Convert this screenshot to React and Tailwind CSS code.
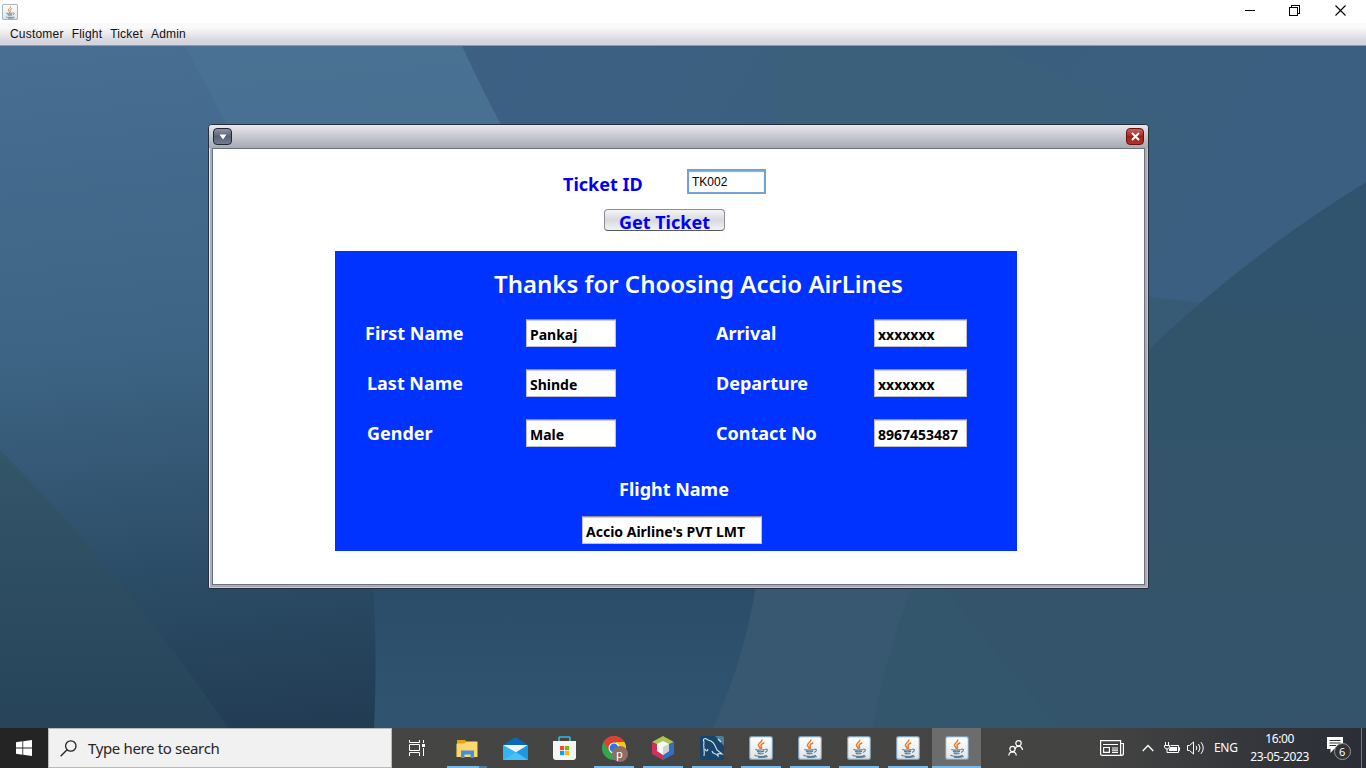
const ui = "font-['Noto_Sans','Open_Sans',sans-serif]";

function Wallpaper() {
  return (
    <svg className="absolute inset-0 h-full w-full" viewBox="0 46 1366 682" preserveAspectRatio="none">
      <defs>
        <linearGradient id="base" x1="0" y1="0" x2="0.2" y2="1">
          <stop offset="0" stopColor="#486f92" />
          <stop offset="0.45" stopColor="#3d6484" />
          <stop offset="0.8" stopColor="#2a4a63" />
          <stop offset="1" stopColor="#223c54" />
        </linearGradient>
        <linearGradient id="top" x1="0" y1="0" x2="1" y2="0.4">
          <stop offset="0" stopColor="#3b6083" />
          <stop offset="0.45" stopColor="#3a5f7d" />
          <stop offset="1" stopColor="#3b5f82" />
        </linearGradient>
        <linearGradient id="left" x1="0" y1="0" x2="0" y2="1">
          <stop offset="0" stopColor="#345669" />
          <stop offset="1" stopColor="#26435a" />
        </linearGradient>
        <linearGradient id="mid" x1="0" y1="0" x2="0" y2="1">
          <stop offset="0" stopColor="#2b4c68" />
          <stop offset="1" stopColor="#305470" />
        </linearGradient>
        <linearGradient id="right" x1="0" y1="0" x2="0" y2="1">
          <stop offset="0" stopColor="#30536f" />
          <stop offset="1" stopColor="#335369" />
        </linearGradient>
      </defs>
      <rect y="46" width="1366" height="682" fill="url(#base)" />
      <path d="M185 46H462L520 140H235Z" fill="#4b7495" opacity=".55" />
      <path d="M462 46H1366V740H600V300Q510 150 462 46Z" fill="url(#top)" />
      <path d="M768 46Q780 100 778 140H1210L990 46Z" fill="#3b607b" opacity=".6" />
      <path d="M0 450Q120 570 228 728H0Z" fill="url(#left)" />
      <path d="M372 570Q378 650 374 728H760L800 570Z" fill="url(#mid)" />
      <path d="M1366 182Q1240 260 1140 358V600H1366Z" fill="url(#right)" />
      <path d="M1140 296L1366 322V728H1140Z" fill="#34556a" opacity=".5" />
      <path d="M758 570Q748 650 713 728H1366V588H1140V570Z" fill="#375870" />
      <path d="M912 588Q890 640 872 728H1366V588Z" fill="#34566d" />
      <path d="M945 588Q1000 660 1062 728H1366V588Z" fill="#33546a" />
    </svg>
  );
}

function Java({ className }) {
  return (
    <svg className={className} viewBox="0 0 24 24" fill="none">
      <defs>
        <linearGradient id="tile" x1="0" y1="0" x2="0" y2="1">
          <stop stopColor="#fff" />
          <stop offset="1" stopColor="#dfe3e6" />
        </linearGradient>
      </defs>
      <rect x=".6" y=".6" width="22.8" height="22.8" rx="2.2" fill="url(#tile)" stroke="#7b9cb5" strokeWidth="1.2" />
      <path d="M12.8 3.5C13.5 6.5 8.5 7 9.5 9.6C10 11 11 11.2 11.3 12.8M15.3 6.8C13 7.8 11.4 8.8 12.2 10.3C12.6 11.2 13 11.7 12 13" stroke="#e9792b" strokeWidth="1.5" />
      <path d="M7.5 13.2C5 14 9 14.6 15.7 13.6M8 15.4Q11.5 16.4 15 15.4M8.7 17.4Q11.7 18.3 14.5 17.4M16 13.3C19.3 12.6 19 15.5 16 16.4M6.3 19C3.5 20 15 21.5 17.8 19.3M9 21.2Q15 21.8 18.8 20.4" stroke="#517d9e" strokeWidth="1.1" />
    </svg>
  );
}

function Label({ children, className = "" }) {
  return <span className={`shrink-0 whitespace-nowrap text-[18px] leading-6 font-bold ${className}`}>{children}</span>;
}

function Field({ children, className = "" }) {
  return (
    <div className={`flex h-7 shrink-0 items-center border border-t-[#8d8e96] border-r-[#c0c1c8] border-b-[#c0c1c8] border-l-[#c0c1c8] bg-white pt-0.5 pl-[3px] text-[14px] font-bold whitespace-nowrap text-black shadow-[inset_0_1px_1px_#c9cad0] ${className}`}>
      {children}
    </div>
  );
}

function Row({ a, av, b, bv, pad, ta = "", tb = "", tv = "", tw = "" }) {
  return (
    <div className="flex h-7 items-center">
      <div className={`w-[191px] shrink-0 ${pad}`}><Label className={ta}>{a}</Label></div>
      <Field className={`w-[90px] ${tv}`}>{av}</Field>
      <div className="w-[258px] shrink-0 pl-[100px]"><Label className={tb}>{b}</Label></div>
      <Field className={`w-[93px] ${tw}`}>{bv}</Field>
    </div>
  );
}

function TicketWindow() {
  return (
    <div className="absolute top-[78px] left-[208px] flex h-[465px] w-[941px] flex-col rounded-t-[4px] rounded-b-[2px] border border-[#26303c] bg-[#a9acb7] px-[3px] pb-[3px] shadow-[inset_1px_1px_0_#eeeef1,inset_-1px_-1px_0_#c6c8cf]">
      <div className="-mx-[3px] flex h-[23px] shrink-0 items-center justify-between rounded-t-[3px] bg-linear-to-b from-[#e9e9ec] via-[#c6c8cf] to-[#a6aab4] px-1">
        <div className="flex h-[17px] w-[19px] items-center justify-center rounded-[4px] border border-[#202734] bg-linear-to-b from-[#8c93a3] via-[#596176] to-[#737d90]">
          <svg className="h-1.5 w-2" viewBox="0 0 8 6"><path d="M.5 .5H7.5L4 5.5Z" fill="#fff" /></svg>
        </div>
        <div className="flex h-[17px] w-[18px] items-center justify-center rounded-[4px] border border-[#65120f] bg-linear-to-b from-[#c8635b] via-[#a71e17] to-[#b33329]">
          <svg className="h-[9px] w-[9px]" viewBox="0 0 9 9"><path d="M1 1L8 8M8 1L1 8" stroke="#fff" strokeWidth="2.1" /></svg>
        </div>
      </div>
      <div className="flex h-[437px] flex-col border border-[#6b7280] bg-white">
        <div className="flex h-[25px] mt-5 items-center pl-[350px]">
          <Label className="w-[124px] text-[#0000f5]"><span className="relative top-0.5">Ticket ID</span></Label>
          <div className="flex h-[25px] w-[79px] items-center border-2 border-[#73a4d1] pl-[3px] font-['Liberation_Sans',Arial,sans-serif] text-[12px] text-black shadow-[inset_0_1px_1px_#a5a6ad]">TK002</div>
        </div>
        <div className="mt-[15px] ml-[391px] flex h-[22px] w-[121px] items-center justify-center rounded-[4px] border border-[#8b8e96] border-b-[#55585f] bg-linear-to-b from-[#f4f4f6] via-[#d7d9df] to-[#f2f3f5] text-[#0000f5]">
          <Label className="pt-[3px]">Get Ticket</Label>
        </div>
        <div className="mt-5 ml-[122px] flex h-[300px] w-[682px] flex-col bg-[#0033ff] text-white">
          <div className="mt-4 h-[34px] pl-[159px] text-[24px] leading-[34px] font-semibold whitespace-nowrap"><span>Thanks for Choosing Accio AirLines</span></div>
          <div className="mt-[18px] flex flex-col gap-[22px]">
            <Row a="First Name" av="Pankaj" b="Arrival" bv="xxxxxxx" pad="pl-[30px]" />
            <Row a="Last Name" av="Shinde" b="Departure" bv="xxxxxxx" pad="pl-8" />
            <Row a="Gender" av="Male" b="Contact No" bv="8967453487" pad="pl-8" />
          </div>
          <div className="mt-[30px] pl-[284px]"><Label>Flight Name</Label></div>
          <div className="mt-[14px] pl-[247px]"><Field className="w-[180px]">Accio Airline's PVT LMT</Field></div>
        </div>
      </div>
    </div>
  );
}

function Slot({ children, bar = true, active = false }) {
  return (
    <div className={`flex h-10 w-[49px] shrink-0 flex-col items-center ${active ? "bg-[#6c6c6c]" : ""}`}>
      <div className="flex h-[38px] w-full items-center justify-center pt-0.5">{children}</div>
      <div className={`h-0.5 ${active ? "w-full" : "w-10"} ${bar ? "bg-[#76b9ed]" : ""}`} />
    </div>
  );
}

function Taskbar() {
  return (
    <div className={`flex h-10 items-center bg-linear-to-r from-[#444544] via-[#444443] via-80% to-[#2a2d35] text-white ${ui}`}>
      <div className="flex h-10 w-12 shrink-0 items-center justify-center bg-[#242424]">
        <svg className="h-4 w-4" viewBox="0 0 16 16" fill="#fff"><path d="M0 2.2L6.4 1.3V7.5H0ZM7.2 1.2L16 0V7.5H7.2ZM0 8.4H6.4V14.7L0 13.8ZM7.2 8.4H16V16L7.2 14.8Z" /></svg>
      </div>
      <div className="flex h-10 w-[344px] shrink-0 items-center border border-[#b9b9b9] bg-[#f1f1f1] pl-[11px] text-[#252525]">
        <svg className="h-[17px] w-[17px]" viewBox="0 0 17 17" fill="none" stroke="#222" strokeWidth="1.3"><circle cx="10.8" cy="6" r="5.2" /><path d="M7.1 9.7L.6 16.2" /></svg>
        <span className="ml-[11px] text-[15px] tracking-[-0.35px]">Type here to search</span>
      </div>
      <div className="flex w-[50px] shrink-0 justify-center">
        <svg className="h-4 w-4" viewBox="0 0 16 16" fill="none" stroke="#fff"><path d="M.5 0V2.5H10.5V0M.5 16V12.5H10.5V16M.5 4.5H10.5V10.5H.5ZM14.5 0V3M14.5 8V16" /><path d="M13 4H16V7H13Z" fill="#fff" stroke="none" /></svg>
      </div>
      <div className="relative flex">
        <Slot>
          <svg className="h-[19px] w-[22px]" viewBox="0 0 22 19"><path d="M1 1H9L11 3H21V18H1Z" fill="#e8a315" /><path d="M1 4.5H8L11 2.5H21.5V18H.5V5Z" fill="#ffd76c" /><path d="M5 19V11.5H18V19H14.5V15.5H8.5V19Z" fill="#3f92dc" /></svg>
        </Slot>
        <div className="absolute bottom-0 left-[37px] h-0.5 w-2 bg-[#4f7d9e]" />
      </div>
      <Slot bar={false}>
        <svg className="h-[23px] w-[25px]" viewBox="0 0 25 23"><path d="M0 8L12.5 0L25 8V15H0Z" fill="#0768b9" /><path d="M0 8H25L13 17Z" fill="#f1f3f5" /><path d="M0 8L16 17L25 23H0Z" fill="#32b5f1" /><path d="M25 8L0 23H25Z" fill="#1b99e2" /><path d="M0 23L13 15L25 23Z" fill="#48c2f5" /></svg>
      </Slot>
      <Slot bar={false}>
        <svg className="h-6 w-[23px]" viewBox="0 0 23 24"><path d="M6 6V1.7Q6 1 6.7 1H16.3Q17 1 17 1.7V6" fill="none" stroke="#31b7e5" strokeWidth="1.7" /><path d="M0 5H23V21Q23 24 20 24H3Q0 24 0 21Z" fill="#f5f5f5" /><path fill="#f05024" d="M7 10H11.2V14.2H7Z" /><path fill="#7eb900" d="M12 10H16.2V14.2H12Z" /><path fill="#00a4ef" d="M7 15H11.2V19.2H7Z" /><path fill="#ffb800" d="M12 15H16.2V19.2H12Z" /></svg>
      </Slot>
      <Slot>
        <div className="relative h-6 w-6">
          <svg className="h-6 w-6" viewBox="0 0 24 24"><circle cx="12" cy="12" r="12" fill="#30a850" /><path d="M1.6 6A12 12 0 0 1 22.4 6H12L7 15Z" fill="#e43e32" /><path d="M22.4 6A12 12 0 0 1 12 24L17 15L14 6Z" fill="#fbc31d" /><circle cx="12" cy="12" r="5.5" fill="#fff" /><circle cx="12" cy="12" r="4.4" fill="#2878e5" /></svg>
          <div className="absolute top-[10px] left-[10px] flex h-4 w-4 items-center justify-center rounded-full bg-[#8d6e63] pb-0.5 text-[11px] leading-none">p</div>
        </div>
      </Slot>
      <Slot>
        <svg className="h-6 w-[22px]" viewBox="0 0 22 24"><path d="M0 6L11 0L22 6L11 11Z" fill="#adc74d" /><path d="M0 6L11 12V24L0 18Z" fill="#cf315d" /><path d="M22 6L11 12V24L22 18Z" fill="#3271bf" /><path d="M5 8L11 5L17 8V15L11 19L5 15Z" fill="#f6f7f5" /><path d="M11 11L17 8V15L11 19Z" fill="#cbd4cf" /></svg>
      </Slot>
      <Slot>
        <svg className="h-6 w-6" viewBox="0 0 24 24" fill="none"><rect width="24" height="24" rx="2" fill="#17456b" /><path d="M15 0H22Q24 0 24 2V10Z" fill="#527c9b" /><path d="M4 20C5 15 3 11 4 6C2 2 6 2 8 4C14 5 15 10 17 14L22 18L18 17.5L18 20C15 16 13 19 12 15M8 13Q7 17 5 13M18 3L21 6" stroke="#d8e5ed" strokeWidth="1.1" /></svg>
      </Slot>
      <Slot><Java className="h-6 w-6" /></Slot>
      <Slot><Java className="h-6 w-6" /></Slot>
      <Slot><Java className="h-6 w-6" /></Slot>
      <Slot><Java className="h-6 w-6" /></Slot>
      <Slot active><Java className="h-6 w-6" /></Slot>
      <svg className="ml-[27px] h-4 w-4 shrink-0" viewBox="0 0 16 16" fill="none" stroke="#fff" strokeWidth="1.2"><circle cx="10.5" cy="3.3" r="2.7" /><path d="M7 9Q7.5 6.5 10.5 6.2Q14 6.5 14.5 10" /><circle cx="4.5" cy="9" r="2.6" /><path d="M.8 15.5Q1 12 4.5 11.8Q8 12 8.3 15.5" /></svg>
      <svg className="ml-[76px] h-4 w-6 shrink-0" viewBox="0 0 24 16" fill="none" stroke="#fff" strokeWidth="1.2"><path d="M21 3.5H23.4V13.5Q23.4 15.4 21.5 15.4H2.5Q.6 15.4 .6 13.5V.6H20.6V13.5Q20.6 15.4 22 15.4M3 4.5H18M3.6 7.5H9.4V12.4H3.6ZM12 8H18M12 10.2H18M12 12.4H18" /></svg>
      <svg className="ml-[18px] h-2 w-3 shrink-0" viewBox="0 0 12 8" fill="none" stroke="#fff" strokeWidth="1.3"><path d="M.7 7L6 1.5L11.3 7" /></svg>
      <svg className="ml-2.5 h-3 w-4 shrink-0" viewBox="0 0 16 12" fill="none" stroke="#fff"><path d="M1.5 0V3M4.5 0V3M.5 3.5H5.5V5Q5 7 3 7Q1 7 .5 5ZM3 7V10.5H14.5V3.5H6.5M14.5 5.5H15.5V8.5H14.5" /><path d="M6.5 5H13V9H5V7Z" fill="#fff" stroke="none" /></svg>
      <svg className="ml-[7px] h-3.5 w-[18px] shrink-0" viewBox="0 0 18 14" fill="none" stroke="#fff"><path d="M.5 4.5H2.5L6.5 1V13L2.5 9.5H.5ZM9 4.8Q10.8 7 9 9.2M11.5 3Q14.5 7 11.5 11M14 1.2Q18.5 7 14 12.8" /></svg>
      <span className="ml-[9px] text-[12px] tracking-[-0.3px]">ENG</span>
      <div className="ml-3 w-[60px] shrink-0 text-center text-[12px] leading-[18px] tracking-[-0.4px] whitespace-nowrap">
        <div>16:00</div>
        <div>23-05-2023</div>
      </div>
      <div className="relative ml-[17px] h-6 w-6 shrink-0">
        <svg className="h-6 w-6" viewBox="0 0 24 24"><path d="M0 1H16V13H7L3.5 17V13H0Z" fill="#fff" /><path d="M2.5 4.5H13.5M2.5 7H13.5M2.5 9.5H9" stroke="#333" /></svg>
        <div className="absolute top-[7px] left-[7px] flex h-[17px] w-[17px] items-center justify-center rounded-full border border-[#999] bg-[#303237] text-[11px] leading-none">6</div>
      </div>
      <div className="ml-auto h-10 w-[5px] shrink-0 border-l border-[#73757a]" />
    </div>
  );
}

export default function App() {
  return (
    <div className="flex h-[768px] w-[1366px] flex-col overflow-hidden bg-white">
      <div className="flex h-[23px] shrink-0 items-center pl-0.5">
        <Java className="h-4 w-4" />
        <div className="ml-auto flex items-center pr-[20px] pb-[2px]">
          <svg className="h-[11px] w-[11px]" viewBox="0 0 11 11" shapeRendering="crispEdges"><path d="M.5 5.5H10.5" stroke="#000" /></svg>
          <svg className="ml-[34px] h-[11px] w-[11px]" viewBox="0 0 11 11" fill="none" stroke="#000" shapeRendering="crispEdges"><path d="M.5 2.5H8.5V10.5H.5ZM2.5 2.5V.5H10.5V8.5H8.5" /></svg>
          <svg className="ml-[35px] h-[11px] w-[11px]" viewBox="0 0 11 11" stroke="#000" strokeWidth="1.1"><path d="M.5 .5L10.5 10.5M10.5 .5L.5 10.5" /></svg>
        </div>
      </div>
      <div className="flex h-[23px] shrink-0 items-center gap-2 border-b border-[#9297a1] bg-linear-to-b from-[#fafafa] from-20% to-[#d4d5dd] to-85% pl-2.5 font-['Liberation_Sans',Arial,sans-serif] text-[12px] tracking-[0.2px] text-[#111]">
        <span>Customer</span><span>Flight</span><span>Ticket</span><span>Admin</span>
      </div>
      <div className={`relative h-[682px] shrink-0 ${ui}`}>
        <Wallpaper />
        <TicketWindow />
      </div>
      <Taskbar />
    </div>
  );
}
